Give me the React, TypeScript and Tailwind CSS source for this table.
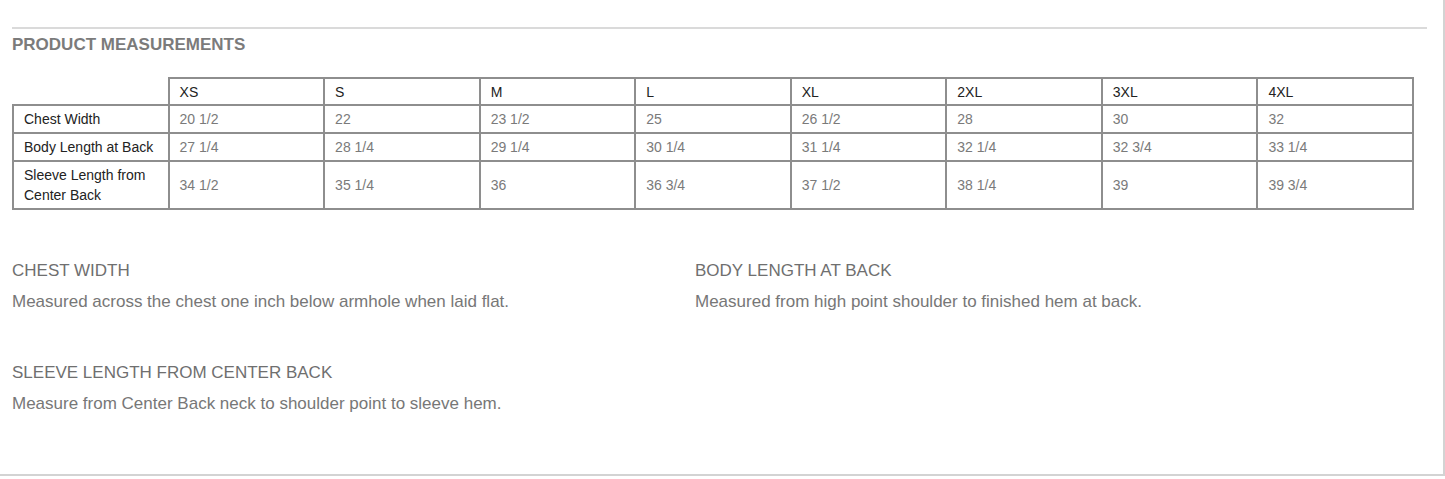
export default function App() {
  const sizes = ["XS", "S", "M", "L", "XL", "2XL", "3XL", "4XL"];
  const rows = [
    {
      label: "Chest Width",
      values: ["20 1/2", "22", "23 1/2", "25", "26 1/2", "28", "30", "32"],
    },
    {
      label: "Body Length at Back",
      values: ["27 1/4", "28 1/4", "29 1/4", "30 1/4", "31 1/4", "32 1/4", "32 3/4", "33 1/4"],
    },
    {
      label: "Sleeve Length from Center Back",
      values: ["34 1/2", "35 1/4", "36", "36 3/4", "37 1/2", "38 1/4", "39", "39 3/4"],
      tall: true,
    },
  ];

  const notes = [
    {
      title: "CHEST WIDTH",
      text: "Measured across the chest one inch below armhole when laid flat.",
    },
    {
      title: "BODY LENGTH AT BACK",
      text: "Measured from high point shoulder to finished hem at back.",
    },
    {
      title: "SLEEVE LENGTH FROM CENTER BACK",
      text: "Measure from Center Back neck to shoulder point to sleeve hem.",
    },
  ];

  return (
    <div className="w-[1445px] h-[476px] bg-white border-r-2 border-b-2 border-[#d3d3d3] font-['Liberation_Sans',Arial,sans-serif]">
      <div className="pl-3 pt-[27px]">
        <div className="w-[1415px] border-t-2 border-[#dadada]" />

        <h2 className="mt-[6px] text-[17px] leading-[20px] font-bold text-[#7b7b7b]">
          PRODUCT MEASUREMENTS
        </h2>

        <table className="mt-[22px] w-[1402px] table-fixed border-collapse text-[14px] leading-[20px]">
          <thead>
            <tr>
              <th className="h-[27px] border-t-0 border-l-0 border-r-2 border-b-2 border-[#8e8e8e]"></th>
              {sizes.map((s) => (
                <th
                  key={s}
                  className="h-[27px] border-2 border-[#8e8e8e] px-[10px] text-left font-normal text-[#222]"
                >
                  {s}
                </th>
              ))}
            </tr>
          </thead>
          <tbody>
            {rows.map((row) => (
              <tr key={row.label}>
                <td
                  className={`${row.tall ? "h-[48px]" : "h-[28px]"} border-2 border-[#8e8e8e] px-[10px] text-[#222]`}
                >
                  {row.tall ? (
                    <>
                      Sleeve Length from
                      <br />
                      Center Back
                    </>
                  ) : (
                    row.label
                  )}
                </td>
                {row.values.map((v, i) => (
                  <td
                    key={i}
                    className="border-2 border-[#8e8e8e] px-[10px] text-[#7a7a7a]"
                  >
                    {v}
                  </td>
                ))}
              </tr>
            ))}
          </tbody>
        </table>

        <div className="mt-[51px] grid grid-cols-[683px_1fr] gap-y-[51px]">
          {notes.map((n) => (
            <div key={n.title}>
              <div className="text-[17px] leading-[20px] text-[#6f6f6f]">{n.title}</div>
              <div className="mt-[11px] text-[17px] leading-[20px] text-[#777]">{n.text}</div>
            </div>
          ))}
        </div>
      </div>
    </div>
  );
}
